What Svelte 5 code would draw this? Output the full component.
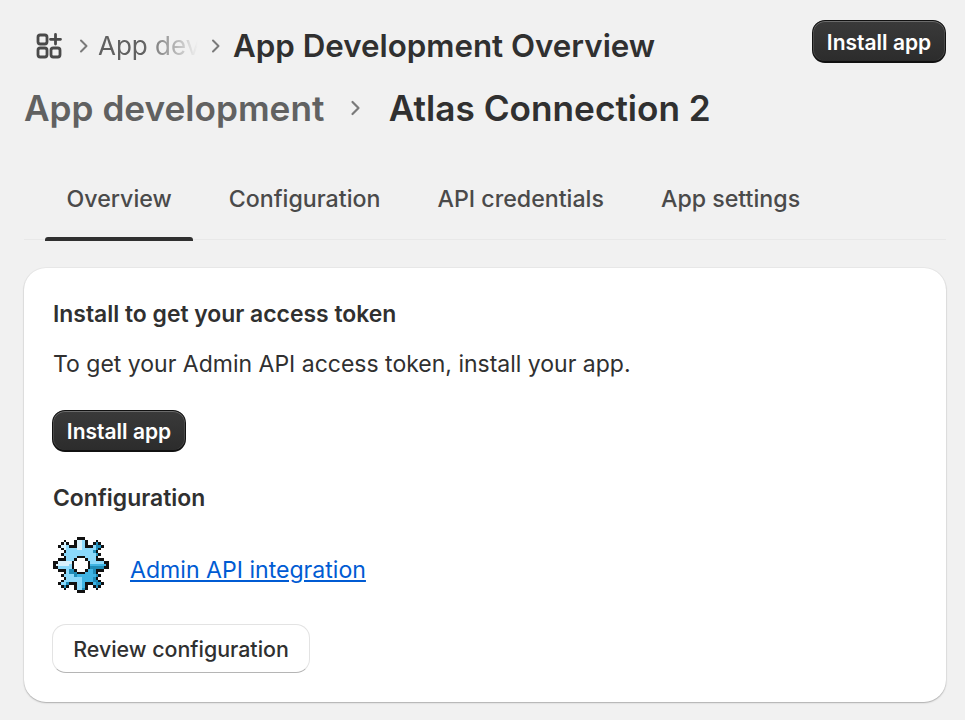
<script>
  const rows = [
    ".........kkk.........",
    "....k...kPPLk...k....",
    "...kPk..kPPLk..kDk...",
    "..kPPLkkkPPLkkkLDDk..",
    "...kPLLLLPPLLLLLDk...",
    "....kLLLLLLLLLLDk....",
    "...kLLLLLLLLLLLLDk...",
    "....kLLLLkkkLLLLk....",
    "..kkkLLLkWWWkLLLkkk..",
    "kkPPPPPkWWWWWkLLLLLkk",
    "kPPPPPLkWWWWWkBBBBBBk",
    "kkLLLLLkWWWWWkDDDDDkk",
    "..kkkLDDkWWWkBBDkkk..",
    "....kLDDDkkkBBBDk....",
    "...kLLLLDBBBBBBBDk...",
    "....kLLLLLLBBBBDk....",
    "...kLLLLLLLBBBBDDk...",
    "..kLLDkkkLLBkkkBDDk..",
    "...kDk..kLLBk..kDk...",
    "....k...kLLDk...k....",
    ".........kkk........."
  ];
  const colors = { k: "#111111", P: "#d8f1fc", L: "#8bd9fb", B: "#3fb4e4", D: "#1f8cb8", W: "#ffffff" };
  const cells = rows.flatMap((r, y) =>
    [...r].map((c, x) => ({ x, y, c })).filter((p) => p.c !== ".")
  );
  const tabs = ["Overview", "Configuration", "API credentials", "App settings"];
</script>

<div class="page">
  <header class="top">
    <nav class="crumbs">
      <svg class="apps" width="26" height="26" viewBox="0 0 26 26" fill="none" stroke="#4a4a4a" stroke-width="2.8">
        <rect x="2" y="2" width="9" height="9" rx="2.2" />
        <rect x="2" y="15" width="9" height="9" rx="2.2" />
        <rect x="15" y="15" width="9" height="9" rx="2.2" />
        <path d="M19.5 1.5v9.5M14.5 6.3h10" stroke-linecap="round" />
      </svg>
      <svg width="10" height="16" viewBox="0 0 10 16" fill="none" stroke="#7a7a7a" stroke-width="2">
        <path d="M2 2.5 7.5 8 2 13.5" stroke-linecap="round" stroke-linejoin="round" />
      </svg>
      <span class="fade">App deve</span>
      <svg width="10" height="16" viewBox="0 0 10 16" fill="none" stroke="#7a7a7a" stroke-width="2">
        <path d="M2 2.5 7.5 8 2 13.5" stroke-linecap="round" stroke-linejoin="round" />
      </svg>
      <span class="crumb-title">App Development Overview</span>
    </nav>
    <button class="primary">Install app</button>
  </header>

  <h1 class="title">
    <span class="parent">App development</span>
    <svg width="12" height="20" viewBox="0 0 12 20" fill="none" stroke="#7a7a7a" stroke-width="2.2">
      <path d="M2.5 4 8.5 10 2.5 16" stroke-linecap="round" stroke-linejoin="round" />
    </svg>
    <span class="current">Atlas Connection 2</span>
  </h1>

  <div class="tabs">
    {#each tabs as tab, i}
      <div class="tab" class:active={i === 0}>{tab}</div>
    {/each}
  </div>

  <section class="card">
    <h2>Install to get your access token</h2>
    <p>To get your Admin API access token, install your app.</p>
    <button class="primary">Install app</button>
    <h2 class="config">Configuration</h2>
    <div class="integration">
      <svg width="56" height="56" viewBox="0 0 21 21" shape-rendering="crispEdges">
        {#each cells as p}
          <rect x={p.x} y={p.y} width="1" height="1" fill={colors[p.c]} />
        {/each}
      </svg>
      <a href="#top">Admin API integration</a>
    </div>
    <button class="secondary">Review configuration</button>
  </section>
</div>

<style>
  :global(body) {
    margin: 0;
    background: #f1f1f1;
  }
  .page {
    box-sizing: border-box;
    height: 720px;
    padding: 20px 19px 0 24px;
    font-family: Inter, "Liberation Sans", sans-serif;
    color: #303030;
    overflow: hidden;
  }
  .top {
    display: flex;
    justify-content: space-between;
    align-items: flex-start;
    height: 53px;
  }
  .crumbs {
    display: flex;
    align-items: center;
    height: 51px;
    padding-left: 12px;
  }
  .apps {
    margin-right: 17px;
  }
  .fade {
    flex: none;
    margin: 0 -4px 0 9px;
    white-space: nowrap;
    font-size: 26px;
    color: #616161;
    -webkit-mask-image: linear-gradient(to right, #000 45px, transparent 100px);
    mask-image: linear-gradient(to right, #000 45px, transparent 100px);
  }
  .crumb-title {
    margin-left: 12px;
    font-size: 31.3px;
    font-weight: 600;
    white-space: nowrap;
  }
  .primary {
    box-sizing: border-box;
    width: 134px;
    height: 43px;
    padding: 2px 0 0;
    border: 1px solid #111;
    border-bottom-width: 2px;
    border-radius: 13px;
    background: linear-gradient(#3a3a3a, #2c2c2c);
    box-shadow: inset 0 1px 0 #6b6b6b, inset 1px 0 0 #4a4a4a, inset -1px 0 0 #4a4a4a;
    color: #fff;
    font: 600 21px Inter, "Liberation Sans", sans-serif;
  }
  .title {
    display: flex;
    align-items: center;
    height: 70px;
    margin: 0;
    font-size: 35.2px;
    font-weight: 600;
    white-space: nowrap;
  }
  .parent {
    color: #616161;
    margin-right: 26px;
  }
  .current {
    margin-left: 26.5px;
  }
  .tabs {
    display: flex;
    gap: 14px;
    height: 97px;
    padding-left: 21px;
    align-items: flex-end;
    border-bottom: 1px solid #e8e8e8;
    box-sizing: border-box;
  }
  .tab {
    position: relative;
    box-sizing: border-box;
    height: 78px;
    padding: 22px 21.5px 0;
    margin-bottom: -2px;
    font-size: 23.2px;
    font-weight: 550;
    color: #4a4a4a;
    white-space: nowrap;
  }
  .tab.active::after {
    content: "";
    position: absolute;
    left: 0;
    right: 0;
    bottom: 0;
    height: 4px;
    background: #303030;
    border-radius: 3px 3px 0 0;
  }
  .card {
    box-sizing: border-box;
    width: 922px;
    height: 434px;
    margin-top: 28px;
    padding: 32px 28px 0;
    background: #fff;
    border-radius: 22px;
    box-shadow: 0 1px 0 rgba(0, 0, 0, 0.07), 0 1px 2px rgba(0, 0, 0, 0.2), 0 0 0 1px rgba(0, 0, 0, 0.03);
  }
  h2 {
    margin: 0 0 0 1px;
    font-size: 22.9px;
    line-height: 28px;
    font-weight: 600;
    color: #303030;
  }
  p {
    margin: 22px 0 0 1px;
    font-size: 23px;
    line-height: 28px;
    color: #303030;
  }
  .card .primary {
    display: block;
    height: 42px;
    margin-top: 32px;
  }
  .card .config {
    margin-top: 32px;
  }
  .integration {
    display: flex;
    align-items: center;
    gap: 21px;
    margin-top: 25px;
    margin-left: 1px;
    height: 56px;
  }
  .integration svg {
    flex: none;
  }
  a {
    margin-top: 10px;
    color: #005bd3;
    font-size: 23.1px;
    text-decoration: underline;
  }
  .secondary {
    display: block;
    box-sizing: border-box;
    width: 258px;
    height: 49px;
    margin-top: 31px;
    padding: 0;
    background: #fff;
    border: 1px solid #e3e3e3;
    border-bottom-color: #b5b5b5;
    border-radius: 14px;
    color: #303030;
    font: 450 21.4px Inter, "Liberation Sans", sans-serif;
  }
</style>
